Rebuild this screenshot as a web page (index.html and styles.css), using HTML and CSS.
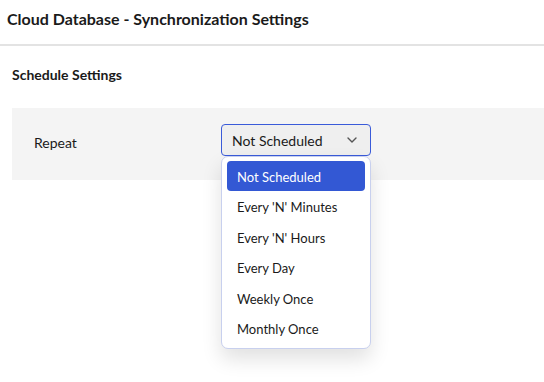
FILE: index.html
```html
<!DOCTYPE html>
<html>
<head>
<meta charset="utf-8">
<link rel="stylesheet" href="styles.css">
</head>
<body>
<header class="page-header">
  <h1 class="page-title">Cloud Database - Synchronization Settings</h1>
</header>
<section class="section">
  <h2 class="section-title">Schedule Settings</h2>
  <div class="panel">
    <div class="field-label">Repeat</div>
    <div class="select-wrap">
      <div class="select">
        <span class="select-value">Not Scheduled</span>
        <svg class="chevron" width="10" height="6" viewBox="0 0 10 6"><path d="M1 1 L5 5 L9 1" fill="none" stroke="#555" stroke-width="1.4" stroke-linecap="round" stroke-linejoin="round"/></svg>
      </div>
      <ul class="menu">
        <li class="menu-item active">Not Scheduled</li>
        <li class="menu-item">Every 'N' Minutes</li>
        <li class="menu-item">Every 'N' Hours</li>
        <li class="menu-item">Every Day</li>
        <li class="menu-item">Weekly Once</li>
        <li class="menu-item">Monthly Once</li>
      </ul>
    </div>
  </div>
</section>
</body>
</html>
```
FILE: styles.css
```css
html, body {
  margin: 0;
  padding: 0;
  background: #fff;
  font-family: Lato, "Open Sans", sans-serif;
  color: #1a1a1a;
}
body {
  min-height: 382px;
}
.page-header {
  height: 44px;
  border-bottom: 2px solid #e3e3e3;
  display: flex;
  align-items: center;
  padding-left: 7px;
}
.page-title {
  margin: 0;
  font-size: 16px;
  font-weight: 700;
  margin-top: -8px;
}
.section {
  padding-left: 12px;
}
.section-title {
  margin: 0;
  font-size: 14px;
  font-weight: 700;
  height: 62px;
  line-height: 58px;
}
.panel {
  background: #f4f4f4;
  height: 72px;
  display: flex;
  align-items: flex-start;
}
.field-label {
  font-size: 14px;
  width: 209px;
  padding-left: 22px;
  box-sizing: border-box;
  margin-top: 26px;
}
.select-wrap {
  position: relative;
  z-index: 2;
  margin-top: 16px;
  width: 150px;
}
.select {
  height: 32px;
  box-sizing: border-box;
  border: 1px solid #3a5bd9;
  border-radius: 4px;
  background: #efefef;
  display: flex;
  align-items: center;
  justify-content: space-between;
  padding: 0 13px 0 10px;
  font-size: 14px;
}
.chevron {
  display: block;
}
.menu {
  position: absolute;
  top: 32px;
  left: 0;
  width: 150px;
  box-sizing: border-box;
  margin: 0;
  list-style: none;
  padding: 4px 5px 5px;
  background: #fff;
  border: 1px solid #c8d0ee;
  border-radius: 7px;
  box-shadow: 0 10px 20px rgba(0, 0, 0, 0.12);
}
.menu-item {
  height: 30.4px;
  box-sizing: border-box;
  padding-top: 2px;
  line-height: 28px;
  padding-left: 10px;
  font-size: 13px;
  border-radius: 4px;
  color: #1a1a1a;
}
.menu-item.active {
  background: #3358d4;
  color: #fff;
}
```
